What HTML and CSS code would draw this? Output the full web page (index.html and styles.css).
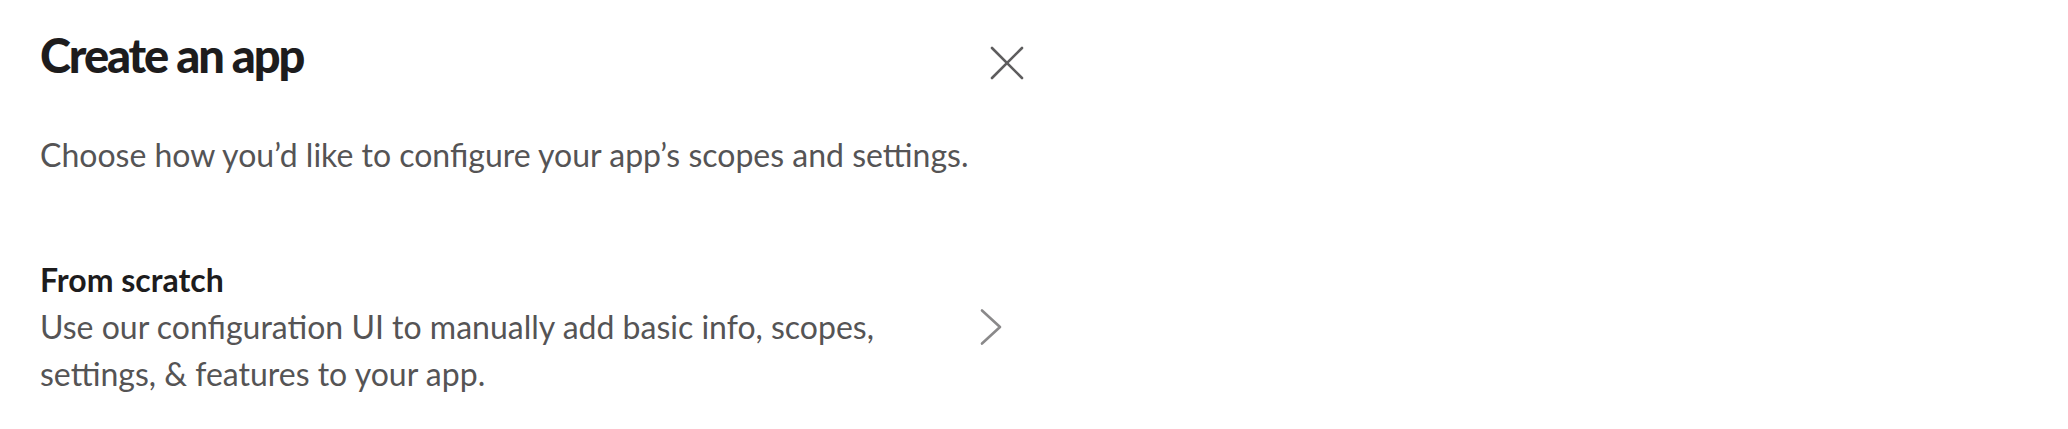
FILE: index.html
```html
<!DOCTYPE html>
<html lang="en">
<head>
<meta charset="utf-8">
<title>Create an app</title>
<link rel="stylesheet" href="styles.css">
</head>
<body>
<div class="modal">
  <header class="modal-header">
    <h1 class="modal-title">Create an app</h1>
    <button class="close-btn" aria-label="Close">
      <svg width="40" height="40" viewBox="0 0 40 40" aria-hidden="true">
        <path d="M5 5 L35 35 M35 5 L5 35" fill="none" stroke="#5e5d5e" stroke-width="2.6" stroke-linecap="round"/>
      </svg>
    </button>
  </header>
  <p class="subtitle">Choose how you’d like to configure your app’s scopes and settings.</p>
  <div class="option">
    <div class="option-text">
      <div class="option-title">From scratch</div>
      <div class="option-desc">Use our configuration UI to manually add basic info, scopes, settings, &amp; features to your app.</div>
    </div>
    <span class="chevron">
      <svg width="40" height="40" viewBox="0 0 40 40" aria-hidden="true">
        <path d="M11 3.5 L29 20 L11 36.5" fill="none" stroke="#8a898a" stroke-width="2.6" stroke-linecap="round" stroke-linejoin="round"/>
      </svg>
    </span>
  </div>
</div>
</body>
</html>
```

FILE: styles.css
```css
html, body {
  margin: 0;
  padding: 0;
  background: #ffffff;
}

body {
  font-family: Lato, "Noto Sans", "Liberation Sans", sans-serif;
  color: #1d1c1d;
}

.modal {
  width: 1043px;
  box-sizing: border-box;
  padding-left: 40px;
}

.modal-header {
  display: flex;
  justify-content: space-between;
  align-items: flex-start;
  padding-top: 23px;
}

.modal-title {
  margin: 0;
  font-size: 47px;
  line-height: 64px;
  font-weight: 900;
  letter-spacing: -2.1px;
  color: #1d1c1d;
}

.close-btn {
  width: 72px;
  height: 72px;
  margin-top: 4px;
  padding: 0;
  border: none;
  background: none;
  display: flex;
  align-items: center;
  justify-content: center;
}

.subtitle {
  margin: 34px 0 0;
  font-size: 32px;
  line-height: 44px;
  color: #555455;
}

.option {
  margin-top: 79px;
  display: flex;
  align-items: center;
}

.option-text {
  flex: 1;
  font-size: 32px;
  line-height: 47px;
}

.option-title {
  font-weight: 700;
  color: #1d1c1d;
}

.option-desc {
  color: #555455;
}

.chevron {
  width: 40px;
  height: 40px;
  margin: 0 32px 0 40px;
  display: flex;
}
```
